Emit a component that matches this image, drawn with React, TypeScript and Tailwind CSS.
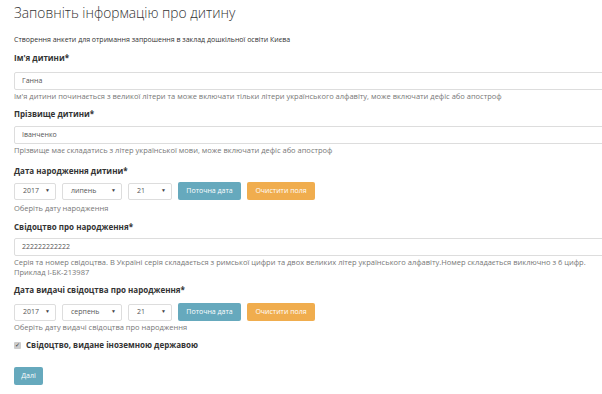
import React from 'react';

const font = { fontFamily: '"Open Sans", "Noto Sans", sans-serif' };

function Label({ children }: { children: React.ReactNode }) {
  return <div className="text-[8px] font-bold text-[#333] leading-[11px]">{children}</div>;
}

function Help({ children }: { children: React.ReactNode }) {
  return <div className="text-[7.5px] text-[#777] leading-[10px]">{children}</div>;
}

function TextInput({ value }: { value: string }) {
  return (
    <div className="h-[18px] w-[600px] border border-[#ddd] rounded-[2px] bg-white pl-[7px] flex items-center text-[7px] text-[#555]">
      {value}
    </div>
  );
}

function Select({ value, w }: { value: string; w: string }) {
  return (
    <div className={`${w} h-[17px] border border-[#ddd] rounded-[2px] bg-white flex items-center justify-between pl-[8px] pr-[5px] text-[7px] text-[#555]`}>
      <span>{value}</span>
      <span className="text-[5px] text-[#444]">▼</span>
    </div>
  );
}

function DateRow({ year, month, day }: { year: string; month: string; day: string }) {
  return (
    <div className="flex items-center gap-[6px]">
      <Select value={year} w="w-[42px]" />
      <Select value={month} w="w-[60px]" />
      <Select value={day} w="w-[44px]" />
      <button className="h-[18px] w-[63px] rounded-[2px] bg-[#66a9bd] text-white text-[7px]">Поточна дата</button>
      <button className="h-[18px] w-[68px] rounded-[2px] bg-[#f0ad4e] text-white text-[7px]">Очистити поля</button>
    </div>
  );
}

export default function App() {
  return (
    <div className="w-[602px] h-[394px] overflow-hidden bg-white" style={font}>
      <div className="pl-[14px] pt-[2px]">
        <h1 className="text-[13.8px] font-light text-[#333] leading-[22px]">Заповніть інформацію про дитину</h1>
        <div className="mt-[11px] text-[7px] text-[#333] leading-[10px]">
          Створення анкети для отримання запрошення в заклад дошкільної освіти Києва
        </div>

        <div className="mt-[7px]"><Label>Ім'я дитини*</Label></div>
        <div className="mt-[9px]"><TextInput value="Ганна" /></div>
        <div className="mt-[1px]">
          <Help>Ім'я дитини починається з великої літери та може включати тільки літери українського алфавіту, може включати дефіс або апостроф</Help>
        </div>

        <div className="mt-[7px]"><Label>Прізвище дитини*</Label></div>
        <div className="mt-[7px]"><TextInput value="Іванченко" /></div>
        <div className="mt-[1px]">
          <Help>Прізвище має складатись з літер української мови, може включати дефіс або апостроф</Help>
        </div>

        <div className="mt-[10px]"><Label>Дата народження дитини*</Label></div>
        <div className="mt-[6px]"><DateRow year="2017" month="липень" day="21" /></div>
        <div className="mt-[3px]"><Help>Оберіть дату народження</Help></div>

        <div className="mt-[8px]"><Label>Свідоцтво про народження*</Label></div>
        <div className="mt-[6px]"><TextInput value="222222222222" /></div>
        <div className="mt-[1px]">
          <Help>Серія та номер свідоцтва. В Україні серія складається з римської цифри та двох великих літер українського алфавіту.Номер складається виключно з 6 цифр.</Help>
          <Help>Приклад І-БК-213987</Help>
        </div>

        <div className="mt-[7px]"><Label>Дата видачі свідоцтва про народження*</Label></div>
        <div className="mt-[8px]"><DateRow year="2017" month="серпень" day="21" /></div>
        <div className="mt-[1px]"><Help>Оберіть дату видачі свідоцтва про народження</Help></div>

        <div className="mt-[7px] flex items-center gap-[5px]">
          <span className="w-[7px] h-[7px] bg-[#ccc] rounded-[1px] flex items-center justify-center text-[6px] text-[#333] leading-none">✓</span>
          <span className="text-[8px] font-bold text-[#333]">Свідоцтво, видане іноземною державою</span>
        </div>

        <button className="mt-[16px] h-[18px] w-[29px] rounded-[2px] bg-[#66a9bd] text-white text-[7px]">Далі</button>
      </div>
    </div>
  );
}
